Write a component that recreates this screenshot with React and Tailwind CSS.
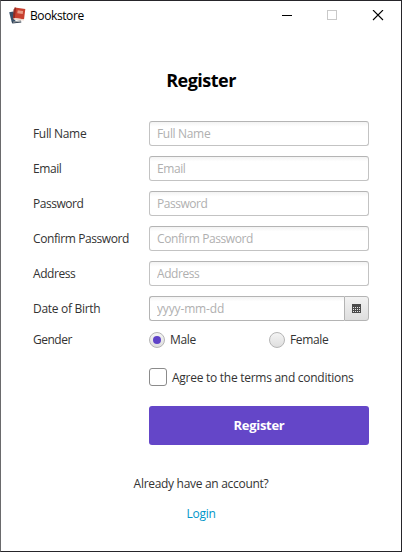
import React from "react";

const fields = [
  { name: "Full Name", tracking: "tracking-[-0.33px]" },
  { name: "Email", tracking: "tracking-[-0.4px]" },
  { name: "Password", tracking: "tracking-[-0.48px]" },
  { name: "Confirm Password", tracking: "tracking-[-0.4px]" },
  { name: "Address", tracking: "tracking-[-0.45px]" },
];

const inputBox =
  "h-[25px] w-full rounded-[3px] border border-[#c3c3c3] border-t-[#b4b4b4] bg-linear-to-b from-[#f3f3f3] to-white to-20% pl-[7px] text-[12px] leading-[23px] text-[#333] outline-none placeholder:text-[#b0b0b0]";

function BooksIcon() {
  return (
    <svg width="17" height="17" viewBox="0 0 17 17" className="shrink-0">
      <path d="M.2 5.300 4.500 4.500l2 10.200-3.700.8z" fill="#38516b" />
      <path d="m2.800 14.600 9.200-1.200.3 2L3.300 16.500z" fill="#2b3c50" />
      <path d="m4 14.700 8-1 .1.900-7.900 1z" fill="#d5d2cc" />
      <path d="M4.500 2.500 6.500 1 5.500 12l-1.500.4z" fill="#7d2925" />
      <path d="m5.700.6 10.600 1.300-1.300 10.400L4.300 11z" fill="#c8402f" />
      <path d="m5.700.6 1.400.2-1.300 10.400-1.500-.2z" fill="#922c24" />
      <path d="m8.700 3.200 5.400.7-.4 3-5.400-.7z" fill="#e99a86" />
      <path d="m4.300 11 10.700 1.300-.1 1.100-10-.7z" fill="#efd8cc" />
    </svg>
  );
}

function TitleBar() {
  return (
    <header className="flex h-[29px] items-center pl-2">
      <BooksIcon />
      <span className="ml-1 text-[12px] leading-4 tracking-[-0.4px] text-black">Bookstore</span>
      <svg width="102" height="12" viewBox="0 0 102 12" shapeRendering="crispEdges" className="mr-[17px] ml-auto">
        <path d="M0 5.500h10" stroke="#000" />
        <path d="M45.500 .5h9v9h-9z" fill="none" stroke="#c9c9c9" />
        <path d="m91 0 10 10m0-10L91 10" stroke="#000" shapeRendering="auto" strokeWidth="1.100" />
      </svg>
    </header>
  );
}

function Row({ label, tracking, children }) {
  return (
    <label className={"flex h-[25px] items-center " + tracking}>
      <span className="w-[116px] shrink-0 whitespace-nowrap">{label}</span>
      {children}
    </label>
  );
}

function CalendarIcon() {
  return (
    <svg width="9" height="9" viewBox="0 0 9 9" shapeRendering="crispEdges">
      <path d="M0 0h9v9H0z" fill="#4a4a4a" />
      <path d="M1 3.500h7M1 5.500h7M1 7.500h7" stroke="#e4e4e4" strokeDasharray="1 1" />
    </svg>
  );
}

function Radio({ label, checked }) {
  return (
    <label className="flex w-[120px] shrink-0 items-center gap-[5px]">
      <span className="flex size-4 items-center justify-center rounded-full border border-[#b5b5b5] bg-linear-to-b from-[#f4f4f4] to-[#dfdfdf]">
        {checked && <span className="size-2 rounded-full bg-[#5f43c8]" />}
      </span>
      <span className="tracking-[-0.35px]">{label}</span>
    </label>
  );
}

export default function App() {
  return (
    <div className="h-[552px] w-[402px] overflow-hidden border border-[#26252a] border-l-[#6a6a6c] bg-white font-['Open_Sans','Noto_Sans',sans-serif] text-[12px] leading-4 text-[#333]">
      <TitleBar />
      <main className="flex flex-col pr-8 pl-8">
        <h1 className="mt-[37px] h-[26px] text-center text-[18px] leading-[26px] font-bold tracking-[-0.5px] text-black">
          Register
        </h1>
        <form className="mt-7 flex flex-col">
          <div className="flex flex-col gap-[10px]">
            {fields.map(({ name, tracking }) => (
              <Row key={name} label={name} tracking={tracking}>
                <input className={inputBox} placeholder={name} />
              </Row>
            ))}
            <Row label="Date of Birth" tracking="tracking-[-0.3px]">
              <div className="flex w-[220px]">
                <input
                  className="h-[25px] w-[195px] rounded-l-[3px] border border-r-0 border-[#b4b4b4] bg-linear-to-b from-[#f3f3f3] to-white to-20% pl-[7px] text-[12px] leading-[23px] tracking-[-0.15px] outline-none placeholder:text-[#b0b0b0]"
                  placeholder="yyyy-mm-dd"
                />
                <span className="flex h-[25px] w-[25px] items-center justify-center rounded-r-[3px] border border-[#b4b4b4] bg-linear-to-b from-[#f2f2f2] to-[#dedede]">
                  <CalendarIcon />
                </span>
              </div>
            </Row>
          </div>
          <div className="mt-[11px] flex h-4 items-center">
            <span className="w-[116px] shrink-0 tracking-[-0.5px]">Gender</span>
            <Radio label="Male" checked />
            <Radio label="Female" />
          </div>
          <label className="mt-5 ml-[116px] flex h-[18px] items-center gap-[5px]">
            <span className="size-[18px] rounded-[3px] border border-[#8b8b8b] bg-white" />
            <span className="mt-0.5 whitespace-nowrap tracking-[-0.27px]">Agree to the terms and conditions</span>
          </label>
          <button
            type="button"
            className="mt-5 ml-[116px] h-[39px] w-[220px] rounded-[3px] bg-[#6446c8] pb-0.5 text-[13px] font-bold tracking-[-0.3px] text-white"
          >
            Register
          </button>
        </form>
        <p className="mt-[31px] text-center tracking-[-0.3px]">Already have an account?</p>
        <a className="mt-[14px] text-center tracking-[-0.25px] text-[#0096c9]">Login</a>
      </main>
    </div>
  );
}
